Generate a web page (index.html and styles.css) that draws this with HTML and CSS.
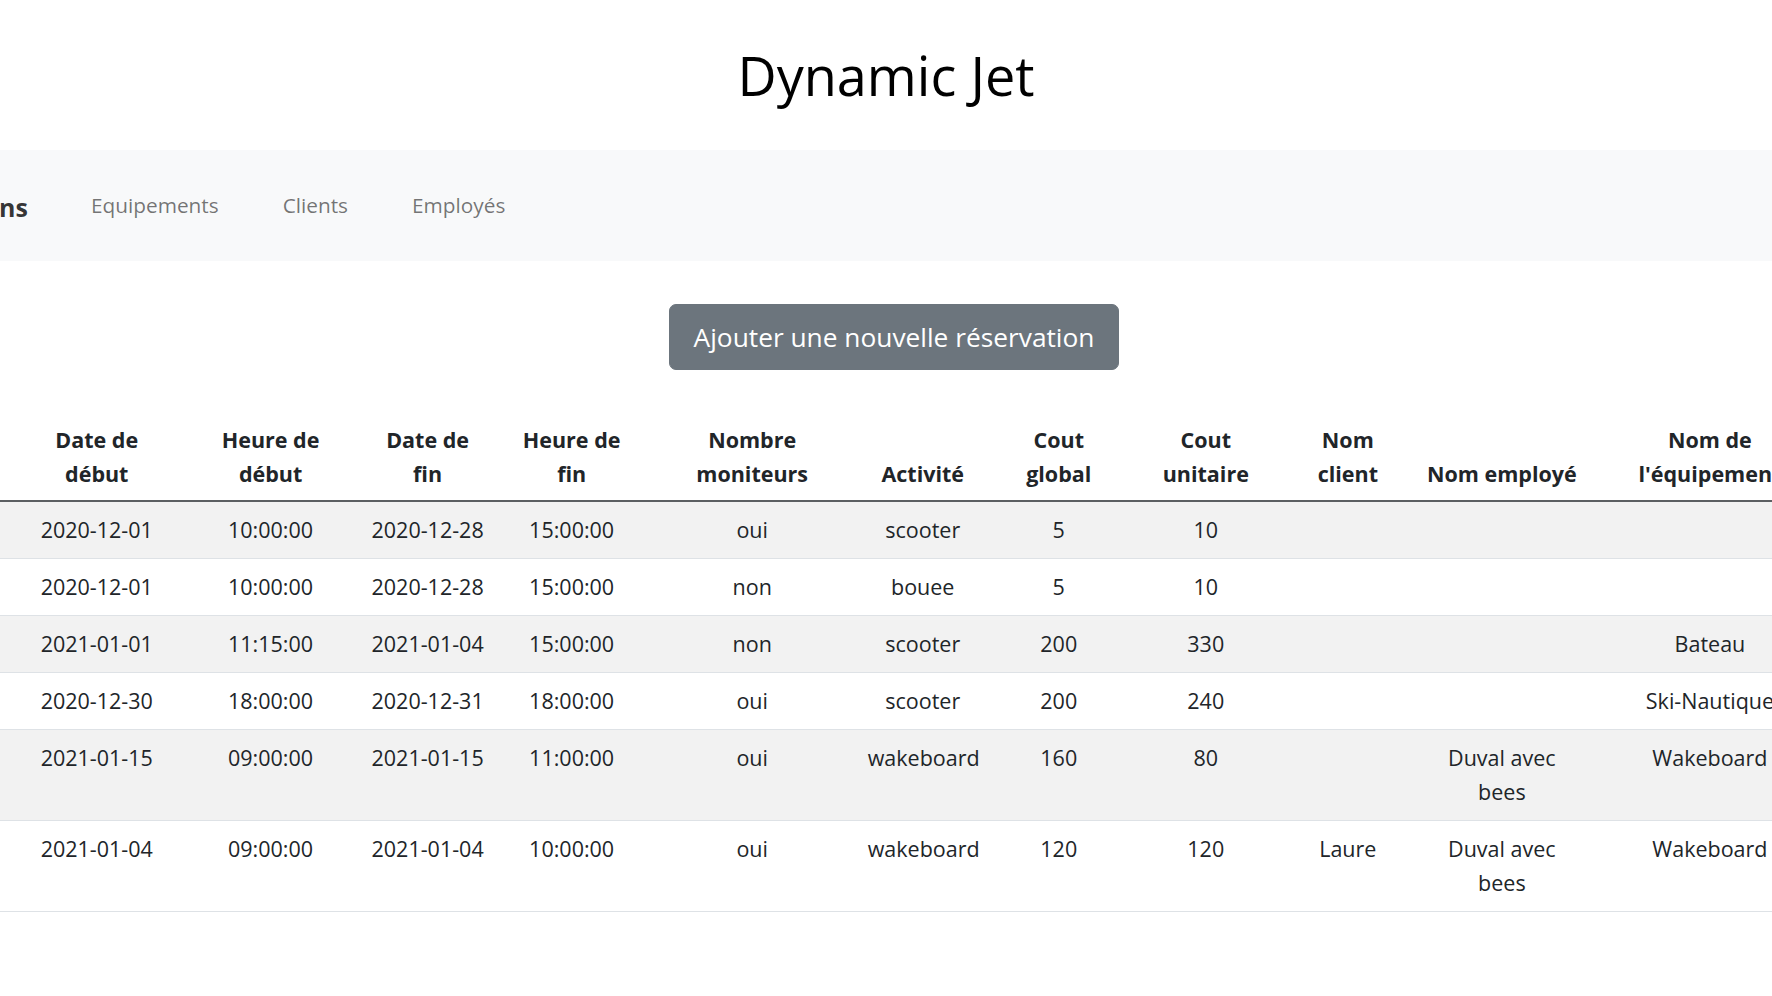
FILE: index.html
```html
<!DOCTYPE html>
<html lang="fr">
<head>
<meta charset="utf-8">
<title>Dynamic Jet</title>
<link rel="stylesheet" href="styles.css">
</head>
<body>
<h1 class="title">Dynamic Jet</h1>

<nav class="navbar">
  <a class="brand" href="#">Réservations</a>
  <ul class="nav-links">
    <li><a class="nav-link" href="#">Equipements</a></li>
    <li><a class="nav-link" href="#">Clients</a></li>
    <li><a class="nav-link" href="#">Employés</a></li>
  </ul>
</nav>

<div class="actions">
  <button class="btn" type="button">Ajouter une nouvelle réservation</button>
</div>

<table class="table">
  <colgroup>
    <col class="c1"><col class="c2"><col class="c3"><col class="c4"><col class="c5"><col class="c6"><col class="c7"><col class="c8"><col class="c9"><col class="c10"><col class="c11">
  </colgroup>
  <thead>
    <tr>
      <th>Date de<br>début</th>
      <th>Heure de<br>début</th>
      <th>Date de<br>fin</th>
      <th>Heure de<br>fin</th>
      <th>Nombre<br>moniteurs</th>
      <th>Activité</th>
      <th>Cout<br>global</th>
      <th>Cout<br>unitaire</th>
      <th>Nom<br>client</th>
      <th>Nom employé</th>
      <th>Nom de<br>l'équipement</th>
    </tr>
  </thead>
  <tbody>
    <tr>
      <td>2020-12-01</td><td>10:00:00</td><td>2020-12-28</td><td>15:00:00</td><td>oui</td><td>scooter</td><td>5</td><td>10</td><td></td><td></td><td></td>
    </tr>
    <tr>
      <td>2020-12-01</td><td>10:00:00</td><td>2020-12-28</td><td>15:00:00</td><td>non</td><td>bouee</td><td>5</td><td>10</td><td></td><td></td><td></td>
    </tr>
    <tr>
      <td>2021-01-01</td><td>11:15:00</td><td>2021-01-04</td><td>15:00:00</td><td>non</td><td>scooter</td><td>200</td><td>330</td><td></td><td></td><td>Bateau</td>
    </tr>
    <tr>
      <td>2020-12-30</td><td>18:00:00</td><td>2020-12-31</td><td>18:00:00</td><td>oui</td><td>scooter</td><td>200</td><td>240</td><td></td><td></td><td>Ski-Nautique</td>
    </tr>
    <tr>
      <td>2021-01-15</td><td>09:00:00</td><td>2021-01-15</td><td>11:00:00</td><td>oui</td><td>wakeboard</td><td>160</td><td>80</td><td></td><td>Duval avec bees</td><td>Wakeboard</td>
    </tr>
    <tr>
      <td>2021-01-04</td><td>09:00:00</td><td>2021-01-04</td><td>10:00:00</td><td>oui</td><td>wakeboard</td><td>120</td><td>120</td><td>Laure</td><td>Duval avec bees</td><td>Wakeboard</td>
    </tr>
  </tbody>
</table>
</body>
</html>
```

FILE: styles.css
```css
html, body {
  overflow: hidden;
}

body {
  margin: 0;
  font-family: "Open Sans", "Noto Sans", "Liberation Sans", sans-serif;
  font-size: 21.5px;
  line-height: 34px;
  color: #212529;
  background: #fff;
}

.title {
  margin: 0;
  padding-top: 43px;
  font-size: 54px;
  font-weight: 400;
  line-height: 1.2;
  text-align: center;
  color: #000;
}

.navbar {
  margin-top: 42px;
  height: 111px;
  background: #f8f9fa;
  display: flex;
  align-items: center;
}

.brand {
  margin-left: -134px;
  font-size: 25px;
  font-weight: 700;
  color: rgba(0, 0, 0, 0.8);
  text-decoration: none;
  padding-top: 4px;
}

.nav-links {
  list-style: none;
  margin: 0 0 0 52px;
  padding: 0;
  display: flex;
  gap: 42px;
  font-size: 20.8px;
}

.nav-link {
  display: block;
  padding: 0 11px;
  color: rgba(0, 0, 0, 0.55);
  text-decoration: none;
}

.actions {
  margin-top: 43px;
  padding-left: 16px;
  display: flex;
  justify-content: center;
}

.btn {
  font-family: inherit;
  font-size: 26.3px;
  line-height: 42px;
  padding: 11px 24px;
  color: #fff;
  background: #6c757d;
  border: 1px solid #6c757d;
  border-radius: 7px;
}

.table {
  margin-top: 42px;
  table-layout: fixed;
  width: 1829px;
  border-collapse: collapse;
}

.c1 { width: 181.5px; }
.c2 { width: 178px; }
.c3 { width: 136px; }
.c4 { width: 152px; }
.c5 { width: 209px; }
.c6 { width: 132px; }
.c7 { width: 140px; }
.c8 { width: 154px; }
.c9 { width: 130px; }
.c10 { width: 178px; }
.c11 { width: 238px; }

.table th,
.table td {
  padding: 11px;
  text-align: center;
  vertical-align: top;
  border-bottom: 1px solid #dee2e6;
}

.table th {
  padding-bottom: 9px;
  font-weight: 700;
  vertical-align: bottom;
  border-bottom: 2px solid #5c5f62;
}

.table th:first-child,
.table td:first-child {
  padding-left: 23px;
}

.table tbody tr:nth-child(odd) td {
  background: #f2f2f2;
}
```
